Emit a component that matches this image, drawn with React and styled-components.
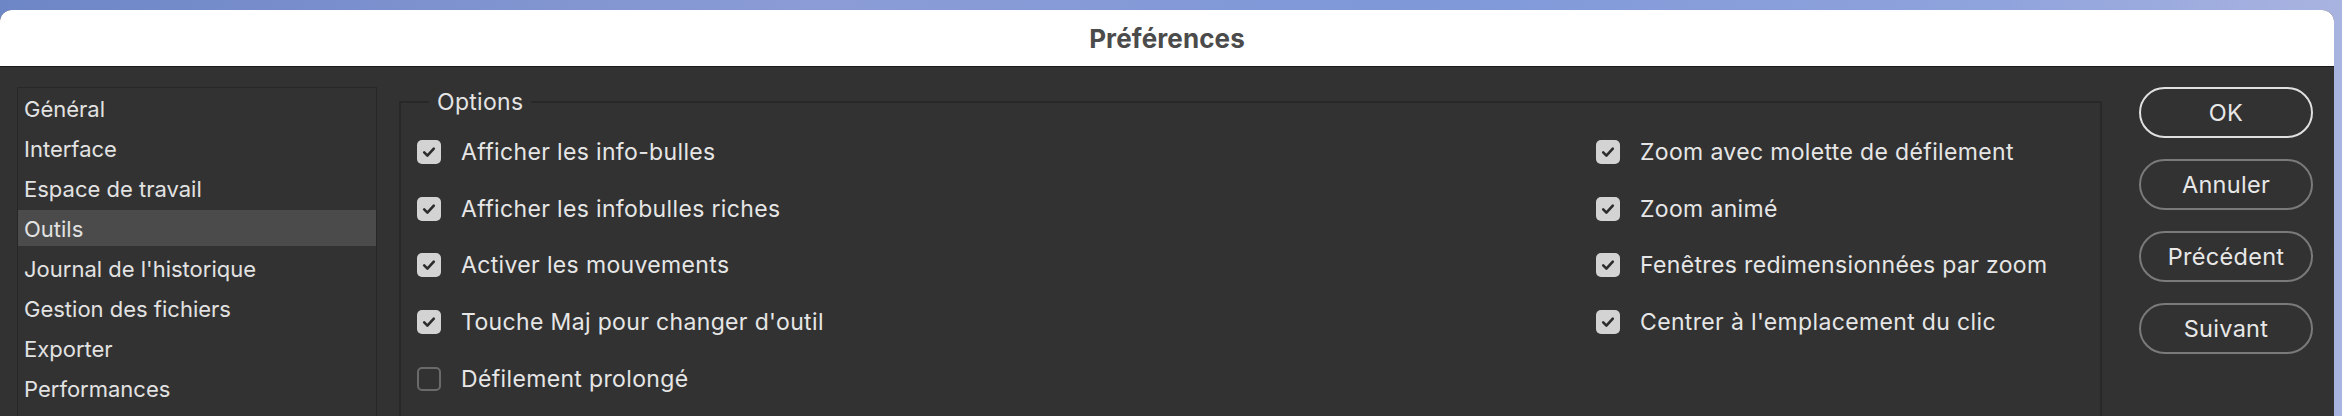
import React from "react";
import styled, { createGlobalStyle } from "styled-components";

const GlobalStyle = createGlobalStyle`
  html, body { margin: 0; padding: 0; }
  body {
    width: 2342px;
    height: 416px;
    overflow: hidden;
    background: linear-gradient(90deg, #6d86c6 0%, #8b9cd6 35%, #7e98d8 60%, #8fa3dc 85%, #a9b3e0 100%);
    font-family: Inter, "Noto Sans", sans-serif;
  }
`;

const Page = styled.div`
  width: 2342px;
  height: 416px;
  box-sizing: border-box;
  padding: 10px 8px 0 0;
  overflow: hidden;
`;

const Dialog = styled.div`
  height: 460px;
  display: flex;
  flex-direction: column;
  border-radius: 12px 12px 0 0;
  overflow: hidden;
  background: #323232;
`;

const TitleBar = styled.div`
  height: 56px;
  flex: none;
  background: #ffffff;
  border-bottom: 1px solid #1b1b1b;
  display: flex;
  align-items: center;
  justify-content: center;
`;

const Title = styled.h1`
  margin: 0;
  font-size: 26px;
  font-weight: 700;
  color: #4b4b4b;
  letter-spacing: 0.1px;
`;

const Body = styled.div`
  flex: 1;
  display: grid;
  grid-template-columns: 360px 1703px 174px;
  column-gap: 22px;
  padding: 20px 21px 0 17px;
  align-items: start;
  & > :nth-child(3) { margin-left: 15px; }
`;

const CategoryList = styled.ul`
  list-style: none;
  margin: 0;
  padding: 2px 0 0;
  height: 360px;
  box-sizing: border-box;
  border: 1px solid #272727;
  display: flex;
  flex-direction: column;
  gap: 4px;
`;

const CategoryItem = styled.li`
  height: 36px;
  box-sizing: border-box;
  display: flex;
  align-items: center;
  padding: 2px 0 0 6px;
  font-size: 22px;
  color: #e2e2e2;
  background: ${(p) => (p.$active ? "#4b4b4b" : "transparent")};
`;

const Group = styled.fieldset`
  margin: 0;
  padding: 7px 0 0 16px;
  min-inline-size: 0;
  height: 360px;
  box-sizing: border-box;
  border: 2px solid #282828;
  border-bottom: none;
`;

const Legend = styled.legend`
  margin-left: 12px;
  padding: 0 8px;
  font-size: 23px;
  letter-spacing: 0.3px;
  line-height: 30px;
  color: #e4e4e4;
`;

const Columns = styled.div`
  display: grid;
  grid-template-columns: 1179px 1fr;
`;

const Column = styled.div`
  display: flex;
  flex-direction: column;
`;

const Row = styled.label`
  height: 56.6px;
  display: flex;
  align-items: center;
  gap: 20px;
  font-size: 23px;
  letter-spacing: 0.35px;
  color: #e6e6e6;
`;

const Box = styled.span`
  width: 24px;
  height: 24px;
  flex: none;
  box-sizing: border-box;
  border-radius: 5px;
  display: flex;
  align-items: center;
  justify-content: center;
  background: ${(p) => (p.$checked ? "#d3d3d3" : "transparent")};
  border: ${(p) => (p.$checked ? "none" : "2px solid #6a6a6a")};
`;

const Buttons = styled.div`
  display: flex;
  flex-direction: column;
  gap: 21px;
`;

const Button = styled.button`
  width: 174px;
  height: 51px;
  box-sizing: border-box;
  border-radius: 26px;
  background: transparent;
  border: 2px solid ${(p) => (p.$primary ? "#e0e0e0" : "#7a7a7a")};
  color: #e8e8e8;
  font-family: Inter, "Noto Sans", sans-serif;
  font-size: 23.5px;
  letter-spacing: 0.3px;
  padding: 0;
`;

const Check = () => (
  <svg width="16" height="16" viewBox="0 0 16 16">
    <path d="M3.2 8.4 L6.4 11.6 L12.8 4.6" fill="none" stroke="#2c2c2c" strokeWidth="2.6" strokeLinecap="round" strokeLinejoin="round" />
  </svg>
);

const Option = ({ checked, children }) => (
  <Row>
    <Box $checked={checked}>{checked && <Check />}</Box>
    {children}
  </Row>
);

const categories = [
  "Général",
  "Interface",
  "Espace de travail",
  "Outils",
  "Journal de l'historique",
  "Gestion des fichiers",
  "Exporter",
  "Performances",
];

const leftOptions = [
  ["Afficher les info-bulles", true],
  ["Afficher les infobulles riches", true],
  ["Activer les mouvements", true],
  ["Touche Maj pour changer d'outil", true],
  ["Défilement prolongé", false],
];

const rightOptions = [
  ["Zoom avec molette de défilement", true],
  ["Zoom animé", true],
  ["Fenêtres redimensionnées par zoom", true],
  ["Centrer à l'emplacement du clic", true],
];

export default function App() {
  return (
    <>
      <GlobalStyle />
      <Page>
        <Dialog>
          <TitleBar>
            <Title>Préférences</Title>
          </TitleBar>
          <Body>
            <CategoryList>
              {categories.map((c) => (
                <CategoryItem key={c} $active={c === "Outils"}>
                  {c}
                </CategoryItem>
              ))}
            </CategoryList>
            <Group>
              <Legend>Options</Legend>
              <Columns>
                <Column>
                  {leftOptions.map(([t, c]) => (
                    <Option key={t} checked={c}>{t}</Option>
                  ))}
                </Column>
                <Column>
                  {rightOptions.map(([t, c]) => (
                    <Option key={t} checked={c}>{t}</Option>
                  ))}
                </Column>
              </Columns>
            </Group>
            <Buttons>
              <Button $primary>OK</Button>
              <Button>Annuler</Button>
              <Button>Précédent</Button>
              <Button>Suivant</Button>
            </Buttons>
          </Body>
        </Dialog>
      </Page>
    </>
  );
}
